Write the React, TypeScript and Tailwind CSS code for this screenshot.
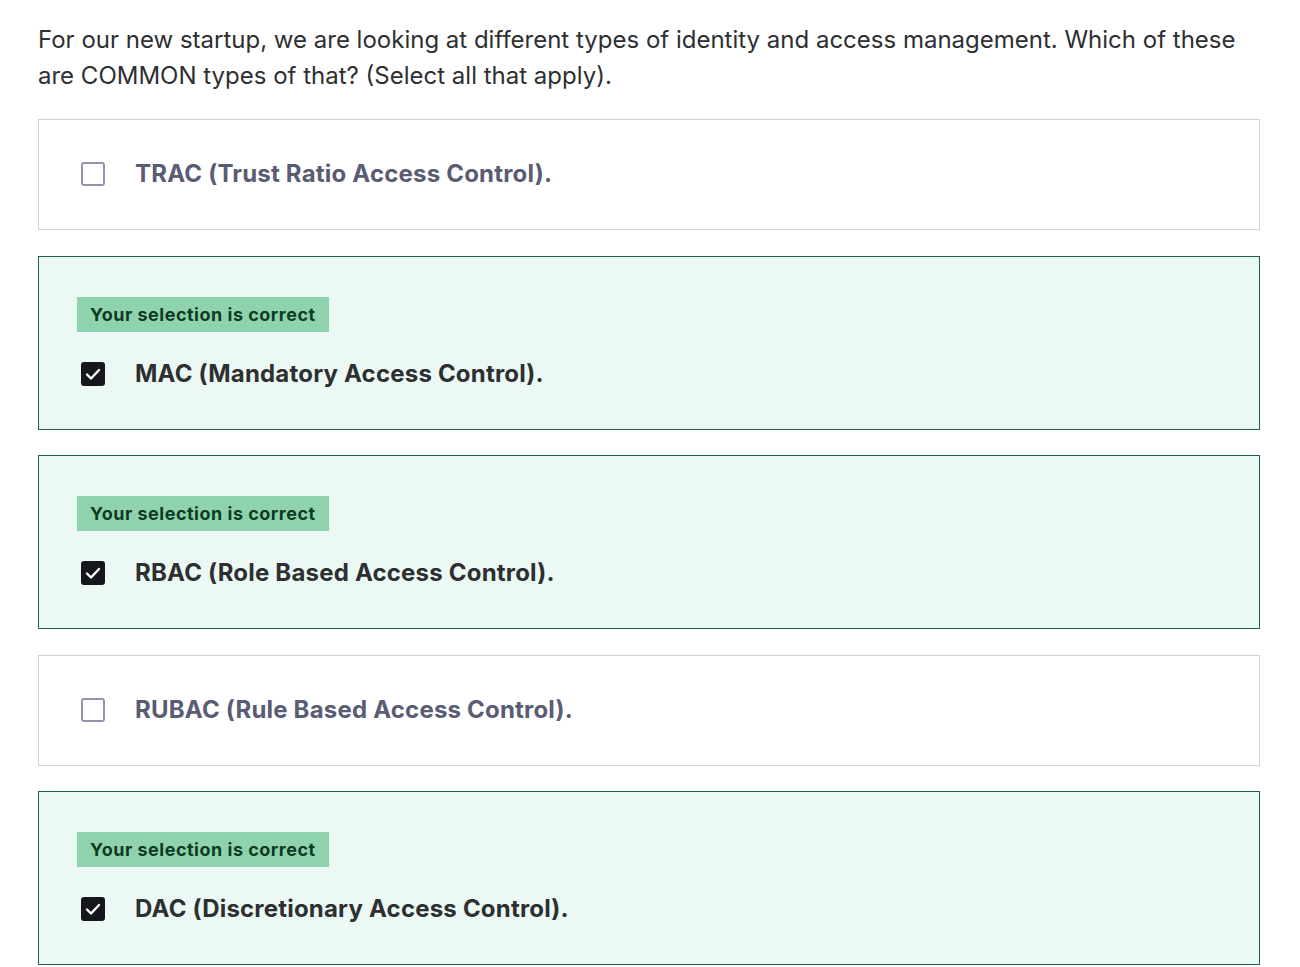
import React from 'react';

interface Option {
  label: string;
  selected: boolean;
}

const options: Option[] = [
  { label: 'TRAC (Trust Ratio Access Control).', selected: false },
  { label: 'MAC (Mandatory Access Control).', selected: true },
  { label: 'RBAC (Role Based Access Control).', selected: true },
  { label: 'RUBAC (Rule Based Access Control).', selected: false },
  { label: 'DAC (Discretionary Access Control).', selected: true },
];

const CheckBox: React.FC<{ checked: boolean }> = ({ checked }) =>
  checked ? (
    <span className="flex h-6 w-6 shrink-0 items-center justify-center rounded-[3px] bg-[#16161d]">
      <svg width="18" height="18" viewBox="0 0 18 18" fill="none">
        <path d="M3 9.5 L7 13.5 L15 5" stroke="white" strokeWidth="2.4" strokeLinecap="round" strokeLinejoin="round" />
      </svg>
    </span>
  ) : (
    <span className="h-6 w-6 shrink-0 rounded-[3px] border-2 border-[#9194ac] bg-white" />
  );

export default function App() {
  return (
    <div className="min-h-screen bg-white px-[38px] pt-[22px]" style={{ fontFamily: 'Inter, "Liberation Sans", sans-serif' }}>
      <p className="text-[24px] leading-[36px] text-[#2d2f31]">
        For our new startup, we are looking at different types of identity and access management. Which of these are
        COMMON types of that? (Select all that apply).
      </p>
      <div className="mt-[25px] flex w-[1222px] flex-col gap-[25.5px]">
        {options.map((o) => (
          <div
            key={o.label}
            className={
              o.selected
                ? 'border border-[#1e6055] bg-[#ebf8f3] px-[38px] pt-[40px] pb-[41px]'
                : 'border border-[#d1d2e0] bg-white px-[38px] pt-[40px] pb-[41px]'
            }
          >
            {o.selected && (
              <div className="mb-[28px] inline-block bg-[#8fd3ae] px-[13px] py-[6px] text-[18px] font-bold leading-[23px] tracking-[0.5px] text-[#0d3b22]">
                Your selection is correct
              </div>
            )}
            <div className="flex h-[28px] items-center gap-[30px] pl-[4px]">
              <CheckBox checked={o.selected} />
              <span
                className={
                  o.selected
                    ? 'text-[24px] font-bold tracking-[0.2px] text-[#2d2f31]'
                    : 'text-[24px] font-bold tracking-[0.2px] text-[#595c73]'
                }
              >
                {o.label}
              </span>
            </div>
          </div>
        ))}
      </div>
    </div>
  );
}
